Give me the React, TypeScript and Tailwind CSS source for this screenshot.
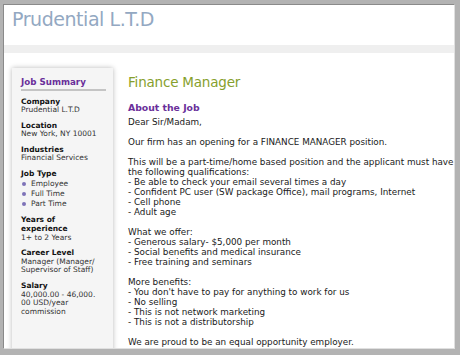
import React from "react";

const font = { fontFamily: '"DejaVu Sans", Verdana, sans-serif' };

function SideItem({ label, lines }: { label: React.ReactNode; lines: string[] }) {
  return (
    <div className="mt-[6.5px]">
      <div className="font-bold text-[7.5px] leading-[8.8px] text-[#111]">{label}</div>
      {lines.map((l, i) => (
        <div key={i} className="text-[7.5px] leading-[8.8px] text-[#333] whitespace-nowrap">
          {l}
        </div>
      ))}
    </div>
  );
}

export default function App() {
  return (
    <div style={font} className="w-[460px] h-[355px] bg-[#b3b3b3] pt-[4px] pl-[3px] pr-[5px] pb-[6px]">
      <div className="w-full h-full bg-white border-l border-t border-r border-b border-l-[#8a8a8a] border-t-[#8a8a8a] border-r-[#e0e0e0] border-b-[#e0e0e0] overflow-hidden flex flex-col">
        <div className="h-[40px] pl-[8px] pt-[2px] shrink-0">
          <div className="text-[19px] leading-[24px] tracking-[-0.45px] text-[#93a8c2]">Prudential L.T.D</div>
        </div>
        <div className="h-[8px] bg-[#efefef] shrink-0" />
        <div className="flex flex-1 min-h-0">
          <div className="ml-[8px] mt-[15px] w-[101px] bg-[#f5f5f5] shadow-[0_0_5px_rgba(0,0,0,0.28)] pl-[9px] pr-[7px] pt-[8px] shrink-0 self-stretch mb-[-10px]">
            <div className="font-bold text-[8.7px] leading-[12px] text-[#6a2f9a]">Job Summary</div>
            <div className="h-[2px] bg-[#c4c4c4] mt-[1px] mb-[4px]" />
            <SideItem label="Company" lines={["Prudential L.T.D"]} />
            <SideItem label="Location" lines={["New York, NY 10001"]} />
            <SideItem label="Industries" lines={["Financial Services"]} />
            <div className="mt-[6.5px]">
              <div className="font-bold text-[7.5px] leading-[8.8px] text-[#111]">Job Type</div>
              {["Employee", "Full Time", "Part Time"].map((t) => (
                <div key={t} className="flex items-center text-[7.5px] leading-[10.3px] text-[#333]">
                  <span className="w-[4px] h-[4px] rounded-full bg-[#7e73b8] ml-[1px] mr-[5px]" />
                  {t}
                </div>
              ))}
            </div>
            <SideItem label={<>Years of<br />experience</>} lines={["1+ to 2 Years"]} />
            <SideItem label="Career Level" lines={["Manager (Manager/", "Supervisor of Staff)"]} />
            <SideItem label="Salary" lines={["40,000.00 - 46,000.", "00 USD/year", "commission"]} />
          </div>
          <div className="ml-[15px] mt-[20px] flex-1 min-w-0 text-[8.8px] leading-[10px] text-[#1a1a1a] whitespace-nowrap">
            <div className="text-[13.5px] leading-[18px] tracking-[-0.2px] text-[#86a02c]">Finance Manager</div>
            <div className="mt-[11px] font-bold text-[9.3px] leading-[12px] text-[#6a2f9a]">About the Job</div>
            <div className="mt-[3px]">Dear Sir/Madam,</div>
            <div className="mt-[10px]">Our firm has an opening for a FINANCE MANAGER position.</div>
            <div className="mt-[10px]">
              This will be a part-time/home based position and the applicant must have
              <br />
              the following qualifications:
              <br />- Be able to check your email several times a day
              <br />- Confident PC user (SW package Office), mail programs, Internet
              <br />- Cell phone
              <br />- Adult age
            </div>
            <div className="mt-[10px]">
              What we offer:
              <br />- Generous salary- $5,000 per month
              <br />- Social benefits and medical insurance
              <br />- Free training and seminars
            </div>
            <div className="mt-[10px]">
              More benefits:
              <br />- You don't have to pay for anything to work for us
              <br />- No selling
              <br />- This is not network marketing
              <br />- This is not a distributorship
            </div>
            <div className="mt-[10px]">We are proud to be an equal opportunity employer.</div>
          </div>
        </div>
      </div>
    </div>
  );
}
